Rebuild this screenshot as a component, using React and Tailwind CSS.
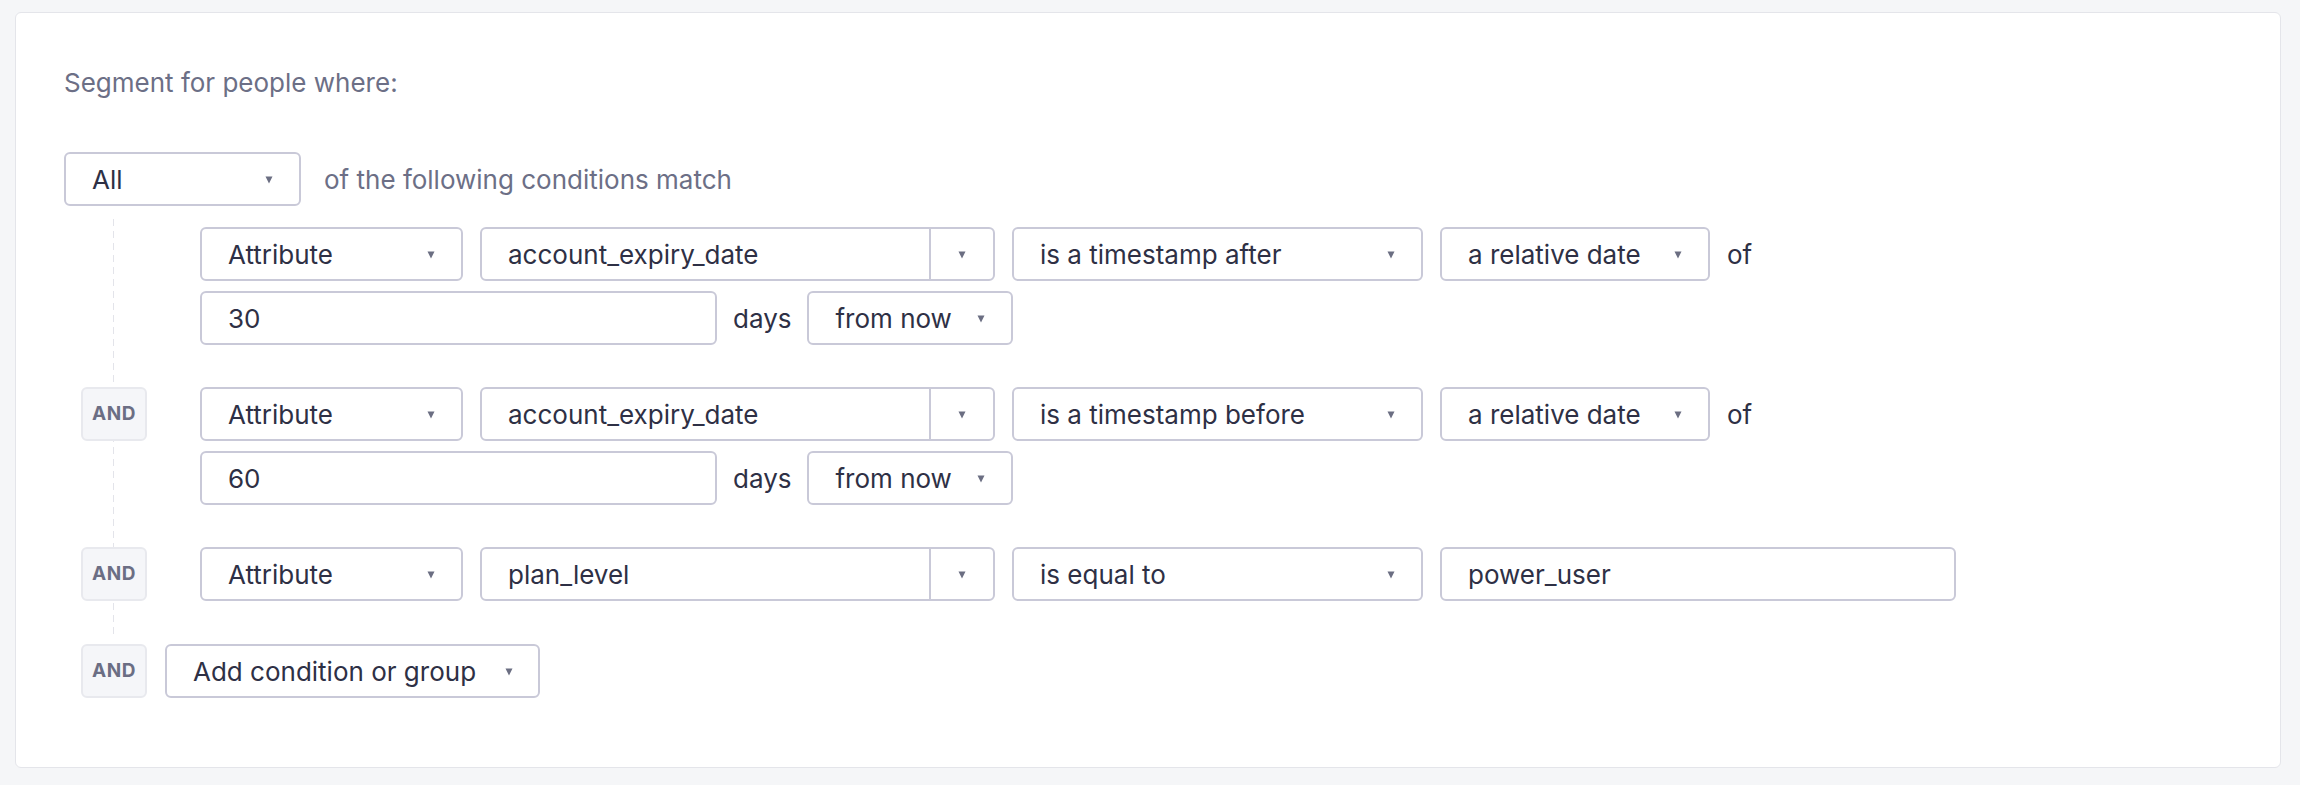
import React from "react";

function Arrow() {
  return (
    <svg width="8" height="9" viewBox="0 0 8 9" className="shrink-0">
      <path d="M0.5 1.5H7.5L4 8.5Z" fill="#6b6e82" />
    </svg>
  );
}

function Select({ label, className = "" }) {
  return (
    <div
      className={`flex h-[54px] shrink-0 items-center justify-between rounded-[6px] border-2 border-[#c9c9d8] bg-white pl-[26px] pr-[26px] ${className}`}
    >
      <span className="whitespace-nowrap">{label}</span>
      <Arrow />
    </div>
  );
}

function Combo({ label }) {
  return (
    <div className="flex h-[54px] w-[515px] shrink-0 items-stretch rounded-[6px] border-2 border-[#c9c9d8] bg-white">
      <div className="flex flex-1 items-center pl-[26px]">{label}</div>
      <div className="flex w-[64px] items-center justify-center border-l-2 border-[#c9c9d8]">
        <Arrow />
      </div>
    </div>
  );
}

function Input({ value, className = "" }) {
  return (
    <div
      className={`flex h-[54px] shrink-0 items-center rounded-[6px] border-2 border-[#c9c9d8] bg-white pl-[26px] ${className}`}
    >
      {value}
    </div>
  );
}

function Badge() {
  return (
    <div className="flex h-[54px] w-[66px] shrink-0 items-center justify-center rounded-[6px] border-2 border-[#e8e9ee] bg-[#f5f6f9] text-[19px] font-bold tracking-[0.5px] text-[#6b6e84]">
      AND
    </div>
  );
}

function DateCondition({ badge, op, days }) {
  return (
    <div className="-ml-[32px] flex">
      <div className="w-[66px] shrink-0">{badge && <Badge />}</div>
      <div className="ml-[53px] flex flex-col gap-[10px]">
        <div className="flex items-center gap-[17px]">
          <Select label="Attribute" className="w-[263px]" />
          <Combo label="account_expiry_date" />
          <Select label={op} className="w-[411px]" />
          <Select label="a relative date" className="w-[270px]" />
          <span>of</span>
        </div>
        <div className="flex items-center gap-[16px]">
          <Input value={days} className="w-[517px]" />
          <span>days</span>
          <Select label="from now" className="w-[206px]" />
        </div>
      </div>
    </div>
  );
}

export default function App() {
  return (
    <div className="min-h-screen bg-[#f5f6f8] pl-[15px] pr-[19px] pt-[12px] pb-[17px] font-['Inter',sans-serif] text-[26px] text-[#2e3045]">
      <div className="rounded-[6px] border border-[#e4e5ea] bg-white pl-[48px] pt-[52px] pb-[69px]">
        <div className="leading-[36px] text-[#6c6f86]">Segment for people where:</div>

        <div className="mt-[51px] flex items-center gap-[23px]">
          <Select label="All" className="w-[237px]" />
          <span className="text-[#6c6f86]">of the following conditions match</span>
        </div>

        <div className="ml-[49px] mt-[13px] bg-[linear-gradient(to_bottom,#e3e4ea_60%,transparent_60%)] bg-[length:1px_12px] bg-repeat-y pt-[8px] pb-[34px]">
          <div className="flex flex-col gap-[42px]">
            <DateCondition badge={false} op="is a timestamp after" days="30" />
            <DateCondition badge={true} op="is a timestamp before" days="60" />
            <div className="-ml-[32px] flex">
              <Badge />
              <div className="ml-[53px] flex items-center gap-[17px]">
                <Select label="Attribute" className="w-[263px]" />
                <Combo label="plan_level" />
                <Select label="is equal to" className="w-[411px]" />
                <Input value="power_user" className="w-[516px]" />
              </div>
            </div>
          </div>
        </div>

        <div className="mt-[9px] flex items-center gap-[18px] pl-[17px]">
          <Badge />
          <div className="flex h-[54px] items-center gap-[29px] rounded-[6px] border-2 border-[#c9c9d8] bg-white pl-[26px] pr-[25px]">
            <span className="whitespace-nowrap">Add condition or group</span>
            <Arrow />
          </div>
        </div>
      </div>
    </div>
  );
}
